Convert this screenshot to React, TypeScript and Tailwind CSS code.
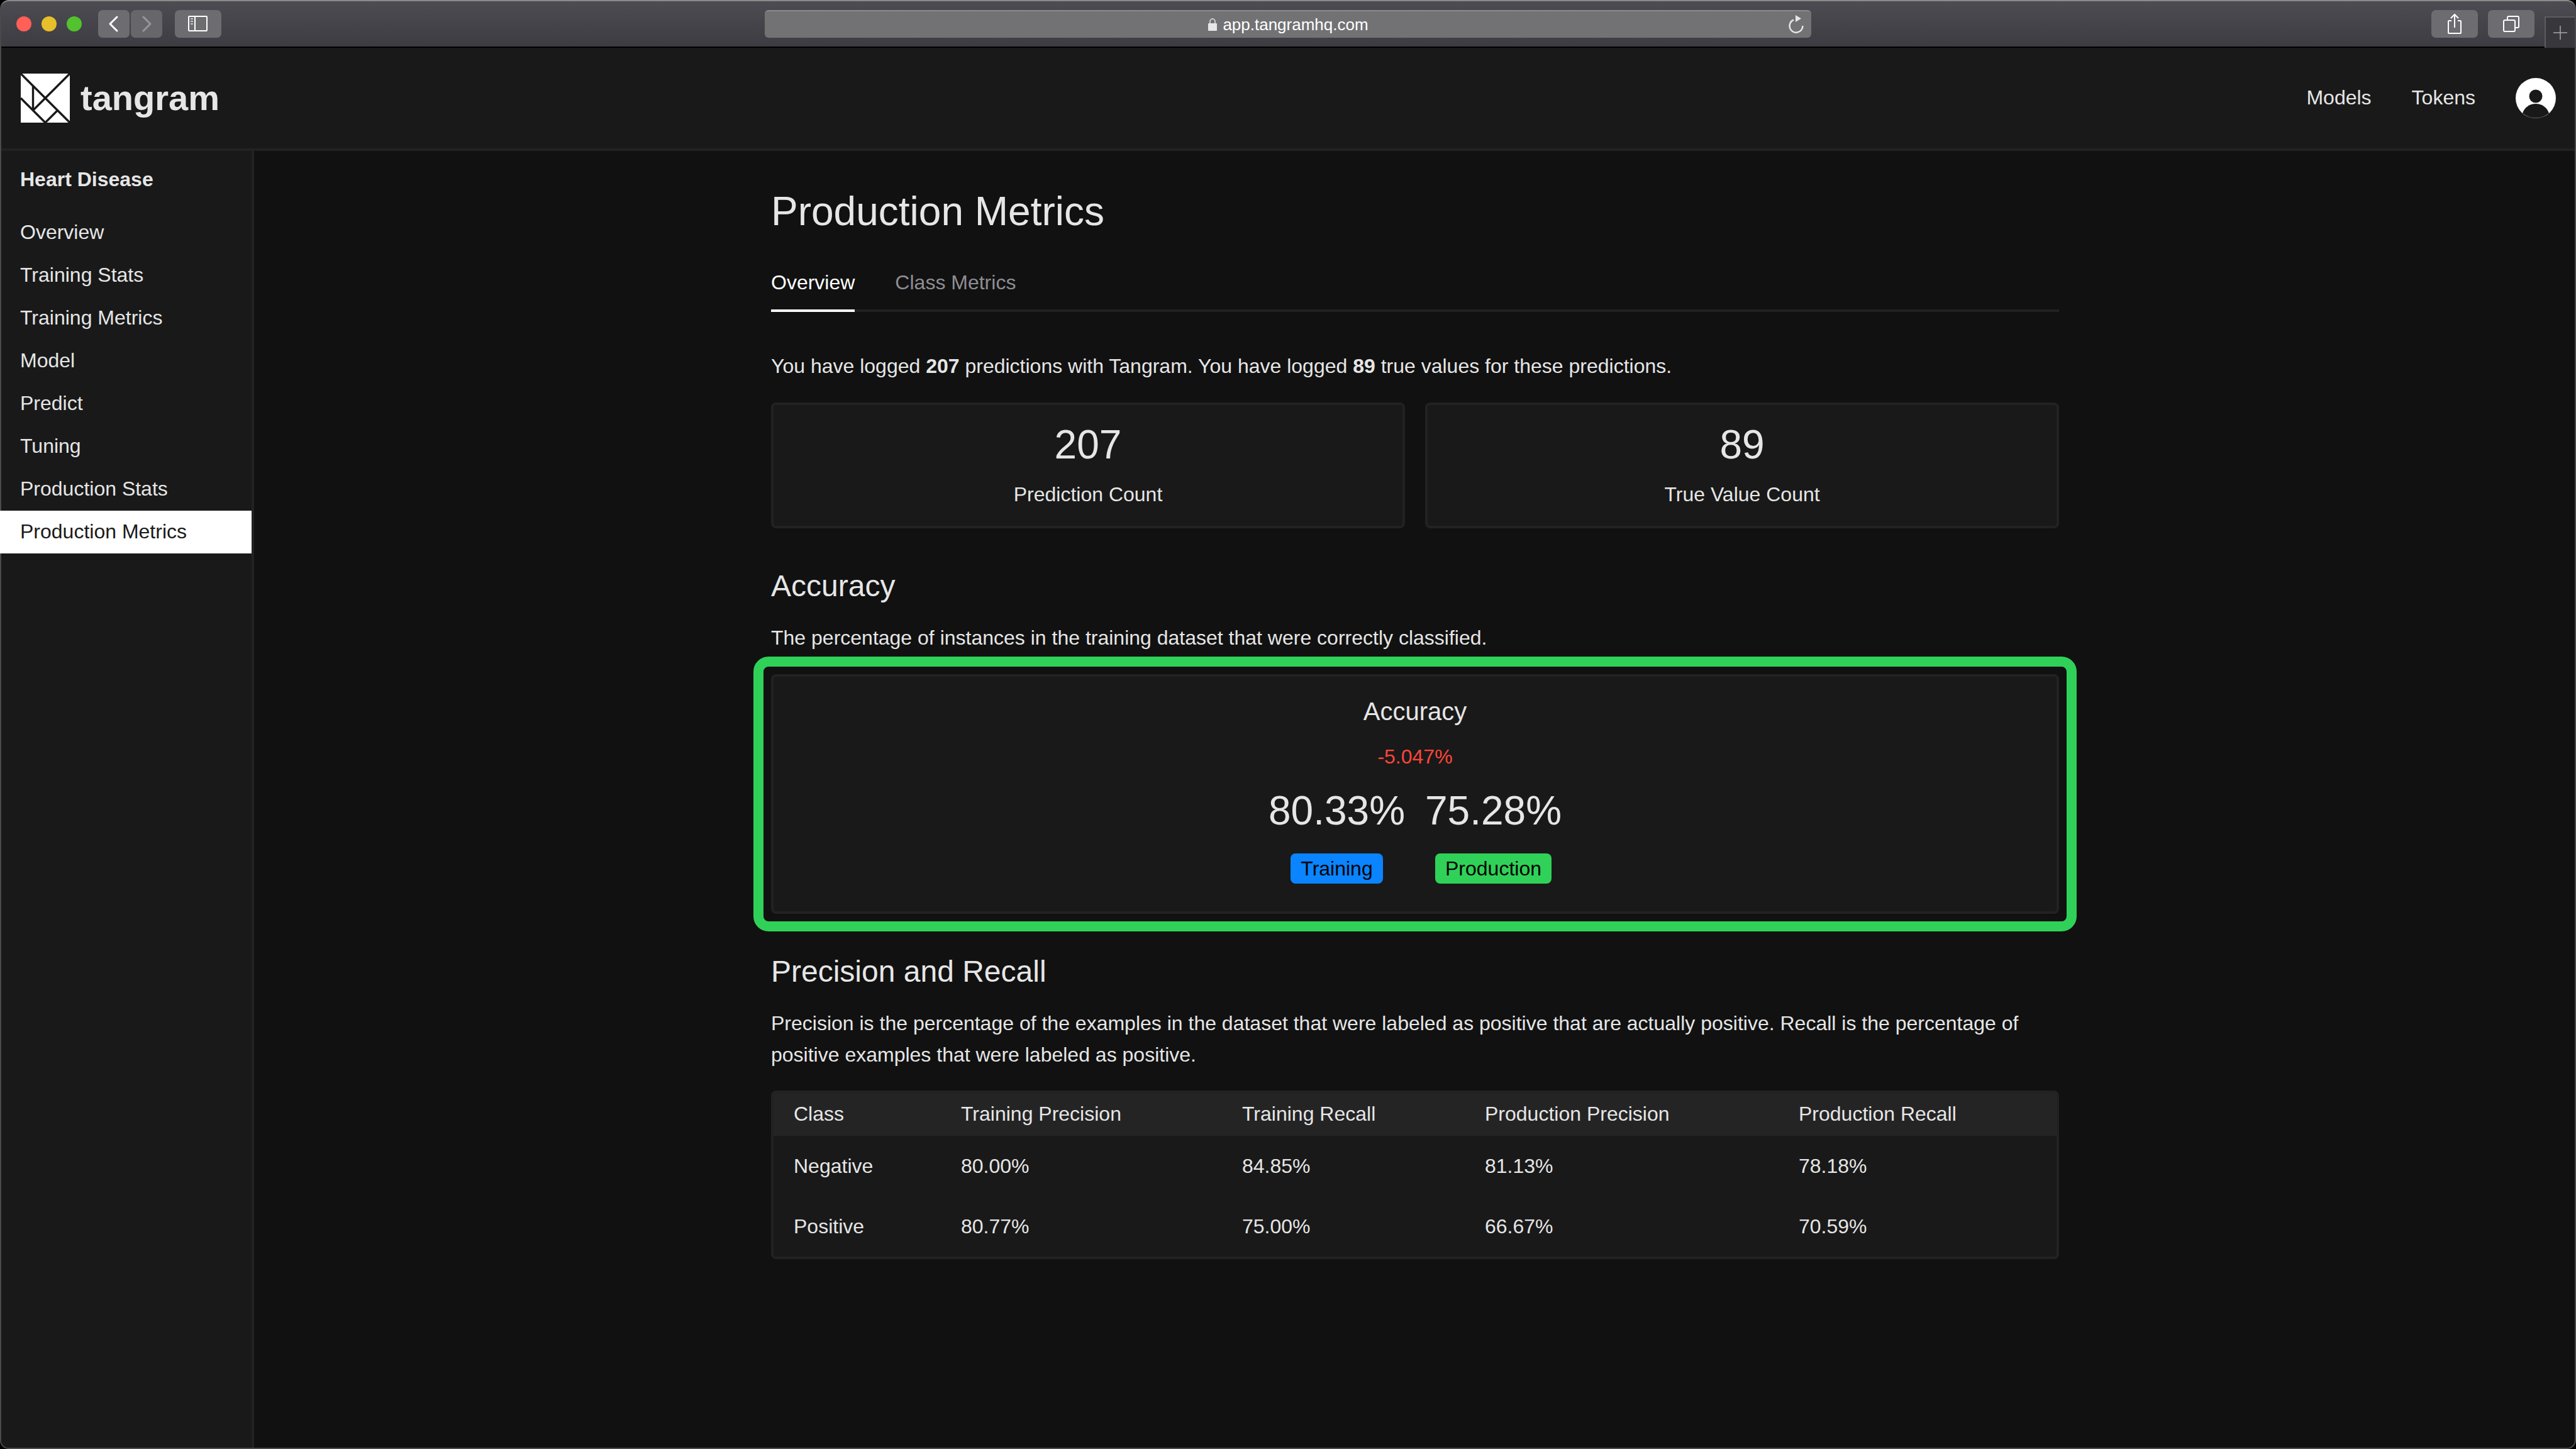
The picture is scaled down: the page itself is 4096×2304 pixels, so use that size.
import React from 'react';

const navItems = ['Overview', 'Training Stats', 'Training Metrics', 'Model', 'Predict', 'Tuning', 'Production Stats', 'Production Metrics'];

const rows = [
  ['Negative', '80.00%', '84.85%', '81.13%', '78.18%'],
  ['Positive', '80.77%', '75.00%', '66.67%', '70.59%'],
];

const headers = ['Class', 'Training Precision', 'Training Recall', 'Production Precision', 'Production Recall'];

function TitleBar() {
  return (
    <div className="flex h-[76px] shrink-0 items-start rounded-t-[12px] border-t-2 border-b-2 border-t-[#8a8a8a] border-b-black bg-gradient-to-b from-[#4c4c52] to-[#3c3c42] pt-[14px] text-white">
      <div className="ml-[24px] flex h-[44px] items-center gap-[16px]">
        <div className="h-[24px] w-[24px] rounded-full bg-[#ff5f57]" />
        <div className="h-[24px] w-[24px] rounded-full bg-[#e6bf2b]" />
        <div className="h-[24px] w-[24px] rounded-full bg-[#52c22f]" />
      </div>
      <div className="ml-[26px] flex h-[44px] w-[50px] items-center justify-center rounded-[7px] bg-[#6c6c71]">
        <svg width="20" height="28" viewBox="0 0 20 28" fill="none" stroke="#fff" strokeWidth="3" strokeLinecap="round" strokeLinejoin="round">
          <path d="M15 3 L4 14 L15 25" />
        </svg>
      </div>
      <div className="ml-[2px] flex h-[44px] w-[50px] items-center justify-center rounded-[7px] bg-[#66666b]">
        <svg width="20" height="28" viewBox="0 0 20 28" fill="none" stroke="#97979b" strokeWidth="3" strokeLinecap="round" strokeLinejoin="round">
          <path d="M5 3 L16 14 L5 25" />
        </svg>
      </div>
      <div className="ml-[20px] flex h-[44px] w-[74px] items-center justify-center rounded-[7px] bg-[#6c6c71]">
        <svg width="32" height="26" viewBox="0 0 32 26" fill="none" stroke="#fff" strokeWidth="2">
          <rect x="1" y="1" width="29" height="23" rx="1" />
          <path d="M11 1 V24" />
          <path d="M4 5 H8 M4 9 H8 M4 13 H8" stroke="#c8c8c8" />
        </svg>
      </div>
      <div className="relative ml-[864px] flex h-[44px] w-[1664px] items-center justify-center rounded-[6px] border-t-2 border-t-[#8b8b8e] bg-[#727275]">
        <svg width="16" height="22" viewBox="0 0 16 22" fill="#e6e6e6" className="mr-[8px]">
          <rect x="1" y="9" width="14" height="12" rx="1" />
          <path d="M4 9 V6 a4 4 0 0 1 8 0 V9" fill="none" stroke="#e6e6e6" strokeWidth="1.5" />
        </svg>
        <span className="text-[26px] leading-none text-white">app.tangramhq.com</span>
        {/* reload: open ring with a filled arrow head */}
        <svg width="28" height="32" viewBox="0 0 28 32" className="absolute right-[10px] top-[4px]">
          <path d="M10 9.5 A10.5 10.5 0 1 0 24.5 19" fill="none" stroke="#e6e6e6" strokeWidth="2.5" />
          <path d="M13 2 L22 7.5 L13 13 Z" fill="#e6e6e6" />
        </svg>
      </div>
      <div className="ml-[986px] flex h-[44px] w-[74px] items-center justify-center rounded-[7px] bg-[#6c6c71]">
        <svg width="24" height="34" viewBox="0 0 24 34" fill="none" stroke="#fff" strokeWidth="2">
          <path d="M7 12 H3 a1 1 0 0 0 -1 1 V31 a1 1 0 0 0 1 1 H21 a1 1 0 0 0 1 -1 V13 a1 1 0 0 0 -1 -1 H17" />
          <path d="M12 23 V2 M6 8 L12 2 L18 8" />
        </svg>
      </div>
      <div className="ml-[16px] flex h-[44px] w-[74px] items-center justify-center rounded-[7px] bg-[#6c6c71]">
        <svg width="26" height="26" viewBox="0 0 26 26" fill="none" stroke="#fff" strokeWidth="2">
          <rect x="1" y="7" width="18" height="18" rx="2" />
          <path d="M7 7 V3 a2 2 0 0 1 2 -2 H23 a2 2 0 0 1 2 2 V17 a2 2 0 0 1 -2 2 H19" />
        </svg>
      </div>
      <div className="ml-[16px] mt-[10px] flex h-[50px] flex-1 items-center justify-center border-l-2 border-t-2 border-[#5c5c60] bg-[#38383c]">
        <svg width="24" height="24" viewBox="0 0 24 24" stroke="#a8a8a8" strokeWidth="1.5">
          <path d="M12 1 V23 M1 12 H23" />
        </svg>
      </div>
    </div>
  );
}

function Logo() {
  return (
    <svg width="78" height="78" viewBox="0 0 232 232" className="shrink-0">
      <rect width="232" height="232" fill="#fff" />
      <g stroke="#191919" strokeWidth="10" fill="none">
        <path d="M0 0 L232 232" />
        <path d="M232 0 L58 174" />
        <path d="M58 58 V174" />
        <path d="M0 116 L116 232" />
        <path d="M116 232 L174 174" />
      </g>
    </svg>
  );
}

function Header() {
  return (
    <div className="flex h-[164px] shrink-0 items-center border-b-4 border-[#222222] bg-[#191919] pl-[31px] pr-[30px]">
      <Logo />
      <span className="ml-[17px] text-[56px] font-bold leading-none text-[#e6e6e6]">tangram</span>
      <div className="ml-auto -mt-[2px] flex items-center gap-[64px] text-[32px] text-[#e6e6e6]">
        <span>Models</span>
        <span>Tokens</span>
      </div>
      <svg width="64" height="64" viewBox="0 0 64 64" className="ml-[64px]">
        <circle cx="32" cy="32" r="32" fill="#fff" />
        <circle cx="32" cy="29" r="10.5" fill="#191919" />
        <path d="M11 56 C14 47 22 41 32 41 C42 41 50 47 53 56 A32 32 0 0 1 11 56 Z" fill="#191919" />
      </svg>
    </div>
  );
}

function Sidebar() {
  return (
    <div className="w-[402px] shrink-0 rounded-bl-[12px] border-r-4 border-[#222222] bg-[#191919]">
      <div className="flex h-[96px] items-end px-[30px] pb-[27px] text-[32px] font-bold leading-[48px] text-[#e6e6e6]">Heart Disease</div>
      {navItems.map((item) =>
        item === 'Production Metrics' ? (
          <div key={item} className="-ml-[2px] flex h-[68px] items-center bg-white pb-[3px] pl-[32px] pr-[30px] text-[32px] text-[#1a1a1a]">{item}</div>
        ) : (
          <div key={item} className="flex h-[68px] items-center px-[30px] pb-[3px] text-[32px] text-[#e6e6e6]">{item}</div>
        )
      )}
    </div>
  );
}

function StatCard({ value, label }: { value: string; label: string }) {
  return (
    <div className="flex h-[200px] flex-col items-center rounded-[8px] border-4 border-[#222222] bg-[#191919] pt-[23px]">
      <div className="text-[64px] leading-[80px]">{value}</div>
      <div className="mt-[15px] text-[32px] leading-[48px]">{label}</div>
    </div>
  );
}

function AccuracyCard() {
  return (
    <div className="relative mt-[34px]">
      <div className="flex h-[381px] flex-col items-center rounded-[8px] border-4 border-[#222222] bg-[#191919] pt-[27px]">
        <div className="text-[40px] leading-[56px]">Accuracy</div>
        <div className="mt-[20px] text-[32px] leading-[48px] text-[#ff453a]">-5.047%</div>
        <div className="mt-[22px] flex gap-[32px]">
          <div className="flex w-[217px] flex-col items-center">
            <div className="text-[64px] leading-[80px]">80.33%</div>
            <div className="mt-[28px] rounded-[8px] bg-[#0a84ff] px-[16px] text-[32px] leading-[48px] text-black">Training</div>
          </div>
          <div className="flex w-[217px] flex-col items-center">
            <div className="text-[64px] leading-[80px]">75.28%</div>
            <div className="mt-[28px] rounded-[8px] bg-[#30d158] px-[16px] text-[32px] leading-[48px] text-black">Production</div>
          </div>
        </div>
      </div>
      <div className="absolute inset-[-28px] rounded-[24px] border-[16px] border-[#30d158]" />
    </div>
  );
}

function MetricsTable() {
  return (
    <div className="mt-[32px] rounded-[8px] border-4 border-[#222222] bg-[#191919] text-[32px]">
      <div className="grid h-[68px] grid-cols-[266px_447px_386px_499px_1fr] items-center bg-[#242424] pb-[3px] pl-[32px]">
        {headers.map((h) => (
          <div key={h}>{h}</div>
        ))}
      </div>
      {rows.map((row) => (
        <div key={row[0]} className="grid h-[96px] grid-cols-[266px_447px_386px_499px_1fr] items-center pl-[32px]">
          {row.map((cell) => (
            <div key={cell}>{cell}</div>
          ))}
        </div>
      ))}
    </div>
  );
}

export default function App() {
  return (
    <div className="h-[2304px] w-[4096px] bg-black">
      <div className="flex h-full flex-col rounded-[14px] border-x-2 border-b-2 border-[#4a4a4a] bg-[#111111] text-[#e6e6e6] [font-family:'Liberation_Sans',Arial,sans-serif]">
        <TitleBar />
        <Header />
        <div className="flex min-h-0 flex-1">
          <Sidebar />
          <div className="flex-1 pl-[2px]">
            <div className="mx-auto w-[2048px] pt-[60px] text-[32px]">
              <h1 className="text-[64px] leading-[72px]">Production Metrics</h1>
              <div className="mt-[53px] flex gap-[64px] border-b-4 border-[#222222] leading-[48px]">
                <div className="-mb-[4px] border-b-4 border-white pb-[19px] text-white">Overview</div>
                <div className="text-[#8e8e93]">Class Metrics</div>
              </div>
              <p className="mt-[62px] leading-[48px]">
                You have logged <b>207</b> predictions with Tangram. You have logged <b>89</b> true values for these predictions.
              </p>
              <div className="mt-[34px] grid grid-cols-2 gap-[32px]">
                <StatCard value="207" label="Prediction Count" />
                <StatCard value="89" label="True Value Count" />
              </div>
              <h2 className="mt-[64px] text-[48px] leading-[56px]">Accuracy</h2>
              <p className="mt-[30px] leading-[48px]">The percentage of instances in the training dataset that were correctly classified.</p>
              <AccuracyCard />
              <h2 className="mt-[64px] text-[48px] leading-[56px]">Precision and Recall</h2>
              <p className="mt-[29px] leading-[50px]">
                Precision is the percentage of the examples in the dataset that were labeled as positive that are actually positive. Recall is the percentage of positive examples that were labeled as positive.
              </p>
              <MetricsTable />
            </div>
          </div>
        </div>
      </div>
    </div>
  );
}
